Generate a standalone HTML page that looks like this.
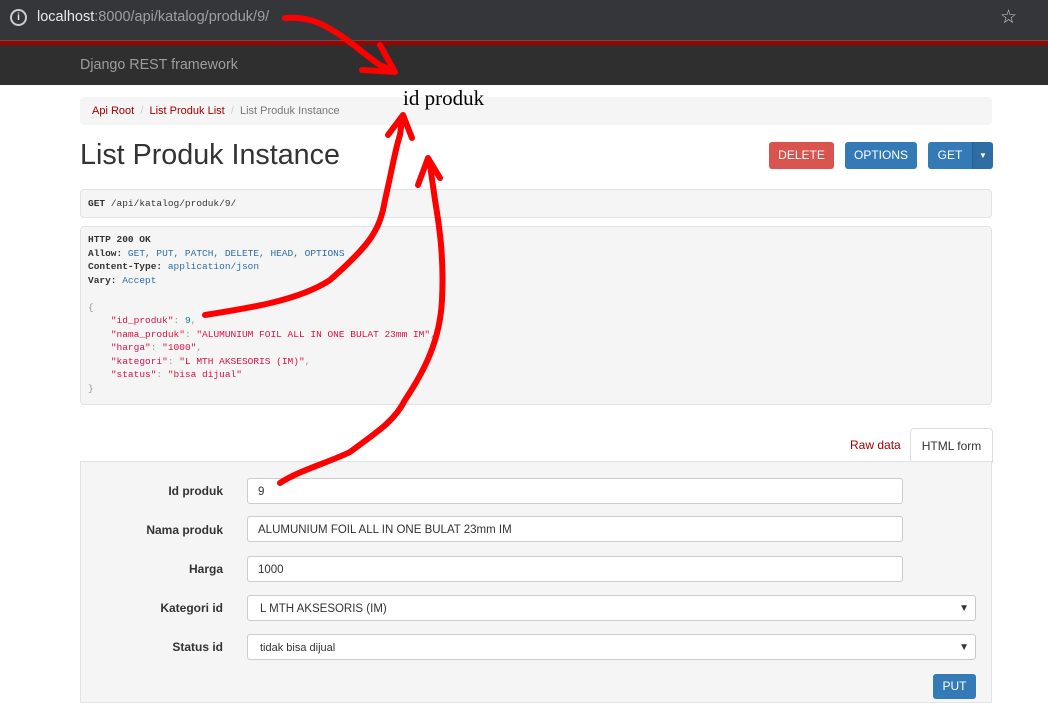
<!DOCTYPE html>
<html><head><meta charset="utf-8"><style>
body{margin:0;width:1048px;height:694px;overflow:hidden;font-family:"Liberation Sans",sans-serif;font-size:13px;color:#333;background:#fff;position:relative}
.addr{position:absolute;left:0;top:0;width:1048px;height:40px;background:#35363a;color:#e8eaed;font-size:14.5px}
.redl{position:absolute;top:40px;left:0;width:1048px;height:5px;background:#a30000;border-top:1px solid #555}
.nav{position:absolute;top:45px;left:0;width:1048px;height:40px;background:#2f2f2f;color:#9d9d9d;font-size:14.3px}
.box{position:absolute;left:80px;width:910px;background:#f5f5f5;border:1px solid #e3e3e3;border-radius:4px}
pre{margin:0;font-family:"Liberation Mono",monospace;font-size:9.5px;line-height:13.5px}
.btn{position:absolute;top:142px;height:27px;color:#fff;font-size:12px;line-height:27px;text-align:center;border-radius:3px}
.lbl{position:absolute;left:100px;width:123px;text-align:right;font-weight:bold;font-size:12px}
.inp{position:absolute;left:247px;height:26px;border:1px solid #ccc;border-radius:3px;background:#fff;font-size:11.5px;line-height:26px;padding-left:10px;box-sizing:border-box}
.k{color:#d14}.s{color:#d14}.n{color:#0b7a8a}.p{color:#999}.b{font-weight:bold;color:#333}.v{color:#2e6da4}
</style></head><body>
<div class="addr"><span style="position:absolute;left:10px;top:9px;width:13px;height:13px;border:2px solid #ccc;border-radius:50%;font-size:10px;text-align:center;line-height:13px;font-weight:bold">i</span><span style="position:absolute;left:37px;top:9px">localhost<span style="color:#9aa0a6">:8000/api/katalog/produk/9/</span></span><span style="position:absolute;left:1000px;top:6px;font-size:19px;color:#ccc">☆</span></div>
<div class="redl"></div>
<div class="nav"><span style="position:absolute;left:80px;top:12px">Django REST framework</span></div>
<div class="box" style="top:97px;height:28px;border:none;background:#f5f5f5;width:912px"><span style="position:absolute;left:12px;top:8px;font-size:11px"><span style="color:#a30000">Api Root</span> <span style="color:#ccc">&nbsp;/&nbsp;</span> <span style="color:#a30000">List Produk List</span> <span style="color:#ccc">&nbsp;/&nbsp;</span> <span style="color:#777">List Produk Instance</span></span></div>
<div style="position:absolute;left:80px;top:139px;font-size:28.7px;color:#333">List Produk Instance</div>
<div class="btn" style="left:769px;width:65px;background:#d9534f">DELETE</div>
<div class="btn" style="left:845px;width:72px;background:#337ab7">OPTIONS</div>
<div class="btn" style="left:928px;width:44px;background:#337ab7;border-radius:3px 0 0 3px">GET</div>
<div class="btn" style="left:972px;width:20px;background:#2e6da4;border-radius:0 3px 3px 0;border-left:1px solid #286090;font-size:8px">▼</div>
<div class="box" style="top:189px;height:27px"><pre style="position:absolute;left:7px;top:7px"><span class="b">GET</span> /api/katalog/produk/9/</pre></div>
<div class="box" style="top:226px;height:177px"><pre style="position:absolute;left:7px;top:6px"><span class="b">HTTP 200 OK</span>
<span class="b">Allow:</span> <span class="v">GET, PUT, PATCH, DELETE, HEAD, OPTIONS</span>
<span class="b">Content-Type:</span> <span class="v">application/json</span>
<span class="b">Vary:</span> <span class="v">Accept</span>

<span class="p">{</span>
    <span class="k">"id_produk"</span><span class="p">:</span> <span class="n">9</span><span class="p">,</span>
    <span class="k">"nama_produk"</span><span class="p">:</span> <span class="s">"ALUMUNIUM FOIL ALL IN ONE BULAT 23mm IM"</span><span class="p">,</span>
    <span class="k">"harga"</span><span class="p">:</span> <span class="s">"1000"</span><span class="p">,</span>
    <span class="k">"kategori"</span><span class="p">:</span> <span class="s">"L MTH AKSESORIS (IM)"</span><span class="p">,</span>
    <span class="k">"status"</span><span class="p">:</span> <span class="s">"bisa dijual"</span>
<span class="p">}</span></pre></div>
<div style="position:absolute;left:850px;top:438px;font-size:12px;color:#a30000">Raw data</div>
<div style="position:absolute;left:910px;top:428px;width:81px;height:34px;border:1px solid #ddd;border-bottom:none;border-radius:4px 4px 0 0;background:#fff;font-size:12px;line-height:34px;text-align:center">HTML form</div>
<div class="box" style="top:461px;height:240px;border-radius:0"></div>
<div class="lbl" style="top:484px">Id produk</div><div class="inp" style="top:478px;width:656px">9</div>
<div class="lbl" style="top:523px">Nama produk</div><div class="inp" style="top:516px;width:656px">ALUMUNIUM FOIL ALL IN ONE BULAT 23mm IM</div>
<div class="lbl" style="top:562px">Harga</div><div class="inp" style="top:556px;width:656px">1000</div>
<div class="lbl" style="top:601px">Kategori id</div><div class="inp" style="top:595px;width:729px;padding-left:12px">L MTH AKSESORIS (IM)<span style="position:absolute;right:6px;font-size:10px">▼</span></div>
<div class="lbl" style="top:640px">Status id</div><div class="inp" style="top:634px;width:729px;padding-left:12px;font-size:11px">tidak bisa dijual<span style="position:absolute;right:6px;font-size:10px">▼</span></div>
<div style="position:absolute;left:933px;top:674px;width:43px;height:25px;background:#337ab7;color:#fff;font-size:12px;text-align:center;line-height:25px;border-radius:3px">PUT</div>
<div style="position:absolute;left:403px;top:86px;font-family:'Liberation Serif',serif;font-size:21px;color:#000">id produk</div>
<svg style="position:absolute;left:0;top:0" width="1048" height="694" fill="none" stroke="#f00" stroke-width="6" stroke-linecap="round" stroke-linejoin="round">
<path d="M285 18 C310 16 325 25 340 35 C355 45 365 55 380 65 L395 72 M362 70 L395 72 L380 45"/>
<path d="M205 315 C250 308 300 300 330 280 C370 245 380 230 385 200 C392 170 395 150 400 135 L402 120 M388 135 L403 115 L412 138"/>
<path d="M280 483 C300 470 330 462 350 452 C380 430 395 420 405 400 C425 370 440 340 442 300 C444 260 440 230 435 200 L430 165 M418 185 L428 158 L440 178"/>
</svg>
</body></html>
